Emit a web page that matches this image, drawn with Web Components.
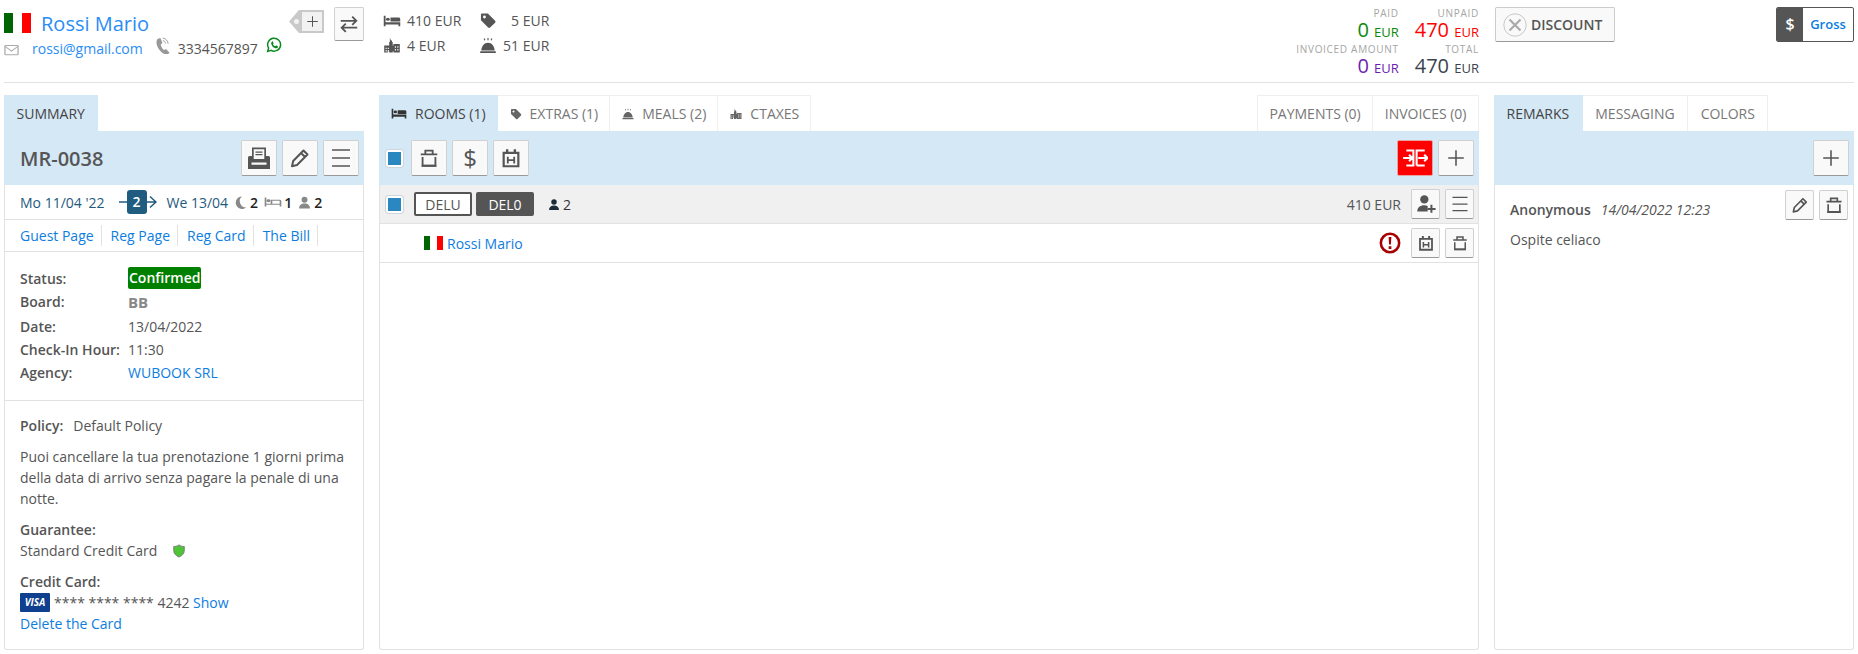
<!DOCTYPE html>
<html>
<head>
<meta charset="utf-8">
<title>Reservation</title>
<style>
    html, body { margin: 0; padding: 0; background: #fff; }
    body { font: 14px/21px "Open Sans", sans-serif; color: #555; overflow: hidden; }
</style>
</head>
<body>
<rv-app></rv-app>
<script>
(function() {
    const DARK = '#555';
    // icon drawings, all on a 24 box
    const ICONS = {
        bed: '<path fill="currentColor" d="M1 3h2.4v11H23v7h-2.4v-3H3.4v3H1z"/><circle fill="currentColor" cx="6.5" cy="9" r="2.6"/><path fill="currentColor" d="M10 6h10.500a2.500 2.500 0 0 1 2.500 2.500V13H10z"/>',
        bedline: '<path fill="none" stroke="currentColor" stroke-width="2.200" d="M2 3v18M2 16.500h20M22 21v-11a1.500 1.500 0 0 0-1.500-1.500H10v8"/><circle fill="currentColor" cx="6" cy="9.500" r="2.800"/>',
        tag: '<path fill="currentColor" fill-rule="evenodd" d="M2 3.500A1.500 1.500 0 0 1 3.500 2h8.300L22 12.200a2 2 0 0 1 0 2.800l-7 7a2 2 0 0 1-2.800 0L2 11.800zM7 5a2 2 0 1 0 0 4 2 2 0 0 0 0-4z"/>',
        city: '<path fill="currentColor" fill-rule="evenodd" d="M9 1l1.500 4H12v2h1v5h1V10h9v12h-9v-2h-1v2H8v-2H6v2H1V12h7V7h1z"/><path fill="#fff" d="M3 15h1.500v2H3zM3 18.500h1.500v2H3zM6 15h1.500v2H6zM6 18.500h1.500v2H6zM16 13h1.500v2H16zM19.500 13H21v2h-1.500zM16 17h1.500v2H16zM19.500 17H21v2h-1.500z"/>',
        bell: '<path fill="currentColor" d="M12 8c-5.500 0-9 5-9.500 11h19C21 13 17.500 8 12 8zM1 20h22v2.500H1z"/><path fill="currentColor" d="M11.200 1.500h1.600v3h-1.600zM5.800 2.500l1.400-.7 1.200 2.600-1.400.7zM18.200 2.500l-1.400-.7-1.200 2.600 1.400.7z"/>',
        mail: '<rect x="1.500" y="3" width="21" height="18.500" rx="1" fill="none" stroke="currentColor" stroke-width="2"/><path fill="none" stroke="currentColor" stroke-width="2" d="M2 5l10 9 10-9"/>',
        phone: '<path fill="currentColor" d="M5.500 2.500L9 1.500l3 7-2.500 2c.5 3 2.200 6 4.700 7.800l2.800-1.500 5 5.500-2.500 2c-2 .8-5 .2-7.500-1.800C7.500 19.500 3.500 13 3.500 7.500c0-2 .7-4 2-5z"/><path fill="none" stroke="currentColor" stroke-width="1.300" d="M12.500 1.500c4 .5 7 3.500 7.500 8M12.500 5c2 .3 3.800 2 4 4.300"/>',
        whatsapp: '<path fill="none" stroke="#0a8a1e" stroke-width="2.200" d="M2.500 21.500l1.400-5A9.700 9.700 0 1 1 7.600 20z"/><path fill="#0a8a1e" d="M8.800 6.800c.5-.5 1.200-.4 1.500.2l.9 1.900c.2.400 0 .8-.2 1.100l-.6.700c.7 1.400 1.900 2.500 3.400 3.200l.8-.9c.3-.3.700-.4 1.100-.2l1.900 1c.4.200.5.700.4 1.100-.4 1.500-1.700 2.300-3.200 2-3.700-.8-6.300-3.400-7-6.800-.2-1.200.3-2.400 1.300-3.300z"/>',
        plus: '<path fill="none" stroke="currentColor" stroke-width="1.700" d="M12 3.500v17M3.500 12h17"/>',
        swap: '<path fill="none" stroke="currentColor" stroke-width="2" d="M3 8.500h17M15.500 4l4.500 4.500-4.500 4.500M21 16H4M8.500 11.500L4 16l4.500 4.500"/>',
        printer: '<path fill="currentColor" fill-rule="evenodd" d="M5 1.500h14V10h2.500A1.500 1.500 0 0 1 23 11.500V23H1V11.500A1.500 1.500 0 0 1 2.500 10H5zM6.700 3.200V13h10.600V3.200zM4.500 16.500v2.300h15v-2.300z"/><path fill="currentColor" d="M8.500 5.500h7v1.200h-7zM8.500 8h7v1.200h-7z"/>',
        pencil: '<path fill="none" stroke="currentColor" stroke-width="2" stroke-linejoin="round" d="M15.500 4.500l4 4L9 19l-5 1.200L5.200 15zM13 7l4 4"/>',
        menu: '<path fill="none" stroke="currentColor" stroke-width="1.500" d="M3 4h18M3 12h18M3 20h18"/>',
        trash: '<path fill="none" stroke="currentColor" stroke-width="2" d="M3 8h18M8 8V4h8v4M5 11v9.500h14V11"/><path fill="currentColor" d="M4 19.200h16v2.300H4z"/>',
        stay: '<path fill="none" stroke="currentColor" stroke-width="2.400" d="M4 6.500h16V21H4z"/><path fill="currentColor" d="M6.500 2.500h2.600V7H6.500zM14.900 2.500h2.600V7h-2.600zM7.500 10.500h2v7.500h-2zM14.500 10.500h2v7.500h-2zM7.500 13.400h9v1.800h-9z"/>',
        split: '<path fill="none" stroke="currentColor" stroke-width="1.900" d="M4 5h6.500v14H4M13.500 19V5H21M13.500 19H21M1 12h8M6.500 9l3 3-3 3M15 12h8M20.500 9l3 3-3 3"/>',
        person: '<circle fill="currentColor" cx="12" cy="7" r="5.500"/><path fill="currentColor" d="M2 23c0-6 4-9 10-9s10 3 10 9z"/>',
        addperson: '<circle fill="currentColor" cx="10" cy="6.500" r="5"/><path fill="currentColor" d="M1.500 21c0-5 3.500-7.500 8.500-7.500 1.500 0 3 .2 4 .8V21z"/><path fill="none" stroke="currentColor" stroke-width="2.400" d="M18.500 13v9.500M14 18h9.500"/>',
        moon: '<path fill="currentColor" d="M14.500 1a11.500 11.500 0 1 0 8 20A11.500 11.500 0 0 1 14.500 1z"/>',
        alert: '<circle fill="none" stroke="currentColor" stroke-width="2.800" cx="12" cy="12" r="10"/><path fill="currentColor" d="M10.500 5.500h3l-.5 8h-2zM10.500 15.500h3v3h-3z"/>',
        shield: '<path fill="#4fc436" stroke="#777" stroke-width="1.600" d="M12 1.500c2.500 2 5.500 2.800 9 2.800v7c0 5-3.500 8.700-9 11-5.500-2.300-9-6-9-11v-7c3.500 0 6.500-.8 9-2.800z"/>',
        discount: '<circle fill="none" stroke="#c8c8c8" stroke-width="1" cx="12" cy="12" r="11.200"/><path fill="none" stroke="#aaa" stroke-width="2.200" d="M6.500 6.500l11 11M17.500 6.500l-11 11"/>',
        arrow: '<path fill="none" stroke="currentColor" stroke-width="1.500" d="M0 8h37M31 2.500L37 8l-6 5.500"/>'
    };

    function make(tag, css, html) {
        customElements.define(tag, class extends HTMLElement {
            constructor() {
                super();
                this.attachShadow({ mode: 'open' });
            }
            connectedCallback() {
                if (this.shadowRoot.firstChild) return;
                const markup = typeof html === 'function' ? html(this) : html;
                this.shadowRoot.innerHTML = `<style>${css}</style>${markup}`;
            }
        });
    }

    make('rv-icon', `
        :host { display: inline-flex; flex: none; }
        svg { display: block; width: 100%; height: 100%; }
    `, el => `<svg viewBox="0 0 ${el.getAttribute('box') || '24 24'}"${el.hasAttribute('stretch') ? ' preserveAspectRatio="none"' : ''}>${ICONS[el.getAttribute('name')] || ''}</svg>`);

    make('rv-flag', `
        :host { display: inline-flex; flex: none; width: 19px; height: 14px; }
        i { flex: 1; }
        .g { background: #006400; } .w { background: #fff; } .r { background: #f00; }
    `, `<i class="g"></i><i class="w"></i><i class="r"></i>`);

    make('rv-btn', `
        :host {
            display: inline-flex; flex: none; align-items: center; justify-content: center;
            box-sizing: border-box; width: 36px; height: 36px;
            background: #f9f9f9; border: 1px solid #d0d0d0; border-bottom-color: #999; border-radius: 2px; color: ${DARK};
        }
        :host([small]) { width: 29px; height: 30px; }
        :host([red]) { background: #f00; border-color: #e8a0a0; color: #fff; }
        rv-icon { width: var(--s, 22px); height: var(--s, 22px); }
    `, el => el.getAttribute('icon') ? `<rv-icon name="${el.getAttribute('icon')}"></rv-icon>` : `<slot></slot>`);

    make('rv-tab', `
        :host {
            display: flex; align-items: center; gap: 8px; box-sizing: border-box; height: 36px; padding: 0 12.5px;
            background: #fff; border: 1px solid #efefef; border-bottom: 0; border-left: 0; color: #777; text-transform: uppercase; white-space: nowrap;
        }
        :host([icon]) { padding: 0 11px 0 12px; }
        :host([slot="tabs-right"]) { padding: 0 11.5px; }
        :host([active]) { background: #d5e8f6; border-color: #d5e8f6; color: #444; }
        rv-icon { width: 12px; height: 12px; color: #666; }
        :host([active]) rv-icon { width: 16px; height: 13px; color: #333; }
    `, el => `${el.getAttribute('icon') ? `<rv-icon stretch name="${el.getAttribute('icon')}"></rv-icon>` : ''}<slot></slot>`);

    make('rv-panel', `
        :host { display: flex; flex-direction: column; min-width: 0; }
        .tabs { display: flex; justify-content: space-between; height: 36px; }
        .group { display: flex; }
        .box {
            flex: 1; display: flex; flex-direction: column; background: #fff;
            border: 1px solid #e2e2e2; border-top: 0; border-radius: 0 0 3px 3px;
        }
        .bar {
            display: flex; align-items: center; gap: 5px; box-sizing: border-box; height: 54px; margin: 0 -1px;
            padding: 0 5px 0 7px; background: #d5e8f6;
        }
    `, `
        <div class="tabs"><div class="group"><slot name="tabs"></slot></div><div class="group"><slot name="tabs-right"></slot></div></div>
        <div class="box"><div class="bar"><slot name="bar"></slot></div><slot></slot></div>
    `);

    make('rv-check', `
        :host {
            display: inline-block; flex: none; box-sizing: border-box; width: 17px; height: 17px;
            background: #2b87c0; border: 2px solid #fff; outline: 1px solid #ccd6de; border-radius: 2px;
        }
    `, ``);

    make('rv-guest', `
        :host { display: block; width: 285px; }
        .name { display: flex; align-items: center; height: 20px; margin-top: 13px; gap: 10px; font-size: 20px; color: #2a8df5; }
        .name rv-flag { width: 27px; height: 20px; }
        .contact { display: flex; align-items: flex-start; margin-top: 4px; color: #555; }
        a { color: #2a8df5; }
        .mail { width: 15px; height: 12px; margin: 7px 13px 0 0; color: #aaa; }
        .mailtext { margin-top: 1px; }
        .phone { width: 17px; height: 17px; margin-left: 11px; color: #999; }
        .num { margin: 1px 8px 0 7px; }
        .wa { width: 16px; height: 16px; }
    `, `
        <div class="name"><rv-flag></rv-flag><span>Rossi Mario</span></div>
        <div class="contact">
            <rv-icon class="mail" stretch name="mail"></rv-icon><a class="mailtext">rossi@gmail.com</a>
            <rv-icon class="phone" name="phone"></rv-icon><span class="num">3334567897</span>
            <rv-icon class="wa" name="whatsapp"></rv-icon>
        </div>
    `);

    make('rv-tag-add', `
        :host { display: flex; align-items: center; width: 35px; height: 23px; margin-top: 10px; background: #c9c9c9;
            clip-path: polygon(0 50%, 10px 0, 100% 0, 100% 100%, 10px 100%); padding: 0 2px 0 5px; box-sizing: border-box; }
        i { width: 5px; height: 5px; border-radius: 50%; background: #f2f2f2; margin-right: auto; }
        div { display: flex; align-items: center; justify-content: center; width: 20px; height: 19px; background: #f2f2f2; color: #555; }
        rv-icon { width: 15px; height: 15px; }
    `, `<i></i><div><rv-icon name="plus"></rv-icon></div>`);

    make('rv-stats', `
        :host { display: grid; grid-template-columns: 96px auto; grid-auto-rows: 25px; margin-left: 19px; margin-top: 8px; white-space: nowrap; }
        span { display: flex; align-items: center; gap: 6px; }
        rv-icon { width: 18px; height: 17px; color: #555; }
        .in { gap: 14px; }
        .b { height: 14px; }
    `, `
        <span><rv-icon class="b" stretch name="bed"></rv-icon>410 EUR</span>
        <span class="in"><rv-icon name="tag"></rv-icon>5 EUR</span>
        <span><rv-icon name="city"></rv-icon>4 EUR</span>
        <span><rv-icon name="bell"></rv-icon>51 EUR</span>
    `);

    make('rv-amount', `
        :host { display: block; text-align: right; white-space: nowrap; color: var(--c); }
        .l { display: block; height: 11px; font-size: 10px; line-height: 11px; letter-spacing: .7px; color: #a5a5a5; }
        .v { display: block; height: 22px; line-height: 22px; font-size: 20px; }
        small { font-size: 13px; }
    `, el => `<span class="l">${el.getAttribute('label')}</span><span class="v">${el.getAttribute('value')} <small>EUR</small></span>`);

    make('rv-amounts', `
        :host { display: grid; grid-template-columns: auto auto; grid-auto-rows: 36px; column-gap: 16px; margin-left: auto; margin-top: 8px; }
    `, `<slot></slot>`);

    make('rv-discount', `
        :host {
            display: flex; align-items: center; gap: 4px; box-sizing: border-box; width: 120px; height: 35px; margin: 7px 0 0 16px; padding-left: 7px;
            background: #f9f9f9; border: 1px solid #ccc; border-bottom-color: #999; border-radius: 2px;
            font-weight: 600; color: #555;
        }
        rv-icon { width: 24px; height: 24px; }
    `, `<rv-icon name="discount"></rv-icon>DISCOUNT`);

    make('rv-gross', `
        :host {
            display: flex; align-items: stretch; box-sizing: border-box; width: 78px; height: 35px; margin: 7px 0 0 161px;
            border: 1px solid #555; border-radius: 2px; overflow: hidden; background: #fff;
        }
        b { display: flex; align-items: center; justify-content: center; width: 26px; background: #555; color: #fff; font-size: 16px; font-weight: 600; }
        span { flex: 1; display: flex; align-items: center; justify-content: center; color: #0d7de0; font-size: 13px; font-weight: 600; }
    `, `<b>$</b><span>Gross</span>`);

    make('rv-topbar', `
        :host { display: flex; align-items: flex-start; box-sizing: border-box; height: 83px; border-bottom: 1px solid #e2e2e2; margin: 0 4px; }
        .swap { width: 30px; height: 34px; margin: 7px 0 0 10px; }
    `, `
        <rv-guest></rv-guest>
        <rv-tag-add></rv-tag-add>
        <rv-btn class="swap" icon="swap"></rv-btn>
        <rv-stats></rv-stats>
        <rv-amounts>
            <rv-amount label="PAID" value="0" style="--c:#0a8a0a"></rv-amount>
            <rv-amount label="UNPAID" value="470" style="--c:#f00"></rv-amount>
            <rv-amount label="INVOICED AMOUNT" value="0" style="--c:#6a1fb0"></rv-amount>
            <rv-amount label="TOTAL" value="470" style="--c:#3a4450"></rv-amount>
        </rv-amounts>
        <rv-discount></rv-discount>
        <rv-gross></rv-gross>
    `);

    make('rv-stay-line', `
        :host { display: flex; align-items: center; box-sizing: border-box; height: 35px; padding-left: 15px; border-bottom: 1px solid #e2e2e2; color: #1f5a7e; white-space: nowrap; }
        .trip { display: flex; align-items: center; justify-content: center; width: 38px; height: 24px; margin: 0 10px 0 14px; position: relative; }
        .trip rv-icon { width: 38px; height: 16px; color: #1f5a7e; }
        .trip b { position: absolute; left: 8px; top: 0; width: 20px; height: 24px; border-radius: 3px; background: #1f5c80; color: #fff; font-weight: 600; text-align: center; line-height: 24px; }
        rv-icon.i { width: 13px; height: 13px; margin: 0 3px 0 6px; color: #888; }
        rv-icon.bed { width: 18px; height: 12px; margin-right: 2px; }
        strong { color: #222; font-weight: 600; }
    `, `
        <span>Mo 11/04 '22</span>
        <div class="trip"><rv-icon name="arrow" box="38 16"></rv-icon><b>2</b></div>
        <span>We 13/04</span>
        <rv-icon class="i" name="moon"></rv-icon><strong>2</strong>
        <rv-icon class="i bed" stretch name="bedline"></rv-icon><strong>1</strong>
        <rv-icon class="i" name="person"></rv-icon><strong>2</strong>
    `);

    make('rv-link-line', `
        :host { display: flex; align-items: center; box-sizing: border-box; height: 32px; padding-left: 15px; border-bottom: 1px solid #e2e2e2; }
        a { color: #0d7de0; padding-right: 7px; margin-right: 9px; border-right: 1px solid #e2e2e2; }
    `, `<a>Guest Page</a><a>Reg Page</a><a>Reg Card</a><a>The Bill</a>`);

    make('rv-info', `
        :host { display: grid; grid-template-columns: 108px 1fr; grid-auto-rows: 23px; align-items: center; padding: 15px 15px 18px; border-bottom: 1px solid #e2e2e2; }
        b { font-weight: 600; }
        .st { justify-self: start; background: #008000; color: #fff; font-weight: 600; border-radius: 2px; height: 22px; line-height: 22px; padding: 0 1px; margin-top: -1px; }
        .s { margin-top: -1px; }
        .bb { font-weight: 700; font-size: 15px; color: #888; padding-top: 2px; }
        .d { margin-top: 4px; }
        a { color: #0d7de0; }
    `, `
        <b class="s">Status:</b><span class="st">Confirmed</span>
        <b>Board:</b><span class="bb">BB</span>
        <b class="d">Date:</b><span class="d">13/04/2022</span>
        <b class="d">Check-In Hour:</b><span class="d">11:30</span>
        <b class="d">Agency:</b><a class="d">WUBOOK SRL</a>
    `);

    make('rv-terms', `
        :host { display: block; padding: 14px 15px 0; }
        b { font-weight: 600; }
        p { margin: 10px 0 0; }
        a { color: #0d7de0; }
        .pol b { margin-right: 10px; }
        .line { display: flex; align-items: center; height: 21px; white-space: pre; }
        rv-icon { width: 14px; height: 16px; margin-left: 15px; }
        .visa {
            display: block; width: 30px; height: 19px; margin-right: 4px; border-radius: 1px;
            background: #0f3f8f; color: #fff; font: italic 700 10px/19px "Open Sans", sans-serif; text-align: center;
        }
    `, `
        <div class="pol"><b>Policy:</b>Default Policy</div>
        <p>Puoi cancellare la tua prenotazione 1 giorni prima della data di arrivo senza pagare la penale di una notte.</p>
        <p><b>Guarantee:</b></p>
        <div class="line">Standard Credit Card<rv-icon name="shield"></rv-icon></div>
        <p><b>Credit Card:</b></p>
        <div class="line"><span class="visa">VISA</span>**** **** **** 4242 <a>Show</a></div>
        <div class="line"><a>Delete the Card</a></div>
    `);

    make('rv-summary', `
        :host { display: flex; }
        rv-panel { flex: 1; }
        h1 { margin: 0 auto 0 9px; font-size: 20px; font-weight: 600; color: #555; }
        rv-btn { --s: 24px; }
    `, `
        <rv-panel>
            <rv-tab slot="tabs" active>Summary</rv-tab>
            <h1 slot="bar">MR-0038</h1>
            <rv-btn slot="bar" icon="printer"></rv-btn>
            <rv-btn slot="bar" icon="pencil"></rv-btn>
            <rv-btn slot="bar" icon="menu"></rv-btn>
            <rv-stay-line></rv-stay-line>
            <rv-link-line></rv-link-line>
            <rv-info></rv-info>
            <rv-terms></rv-terms>
        </rv-panel>
    `);

    make('rv-room-row', `
        :host { display: flex; align-items: center; box-sizing: border-box; height: 39px; padding: 0 4px 0 6px; background: #f0f0f0; border-bottom: 1px solid #e2e2e2; }
        .code { display: inline-flex; align-items: center; justify-content: center; box-sizing: border-box; width: 58px; height: 24px; border: 2px solid #555; border-radius: 2px; background: #fff; color: #555; }
        .code.on { background: #555; color: #fff; margin-left: 4px; }
        rv-check { margin-right: 11px; }
        .p { display: flex; align-items: center; gap: 3px; margin-left: 14px; color: #333; }
        .p rv-icon { width: 12px; height: 13px; color: #1c2b3a; }
        .price { margin: 0 10px 0 auto; }
        rv-btn + rv-btn { margin-left: 5px; }
        rv-btn { --s: 20px; }
    `, `
        <rv-check></rv-check>
        <span class="code">DELU</span><span class="code on">DEL0</span>
        <span class="p"><rv-icon name="person"></rv-icon>2</span>
        <span class="price">410 EUR</span>
        <rv-btn small icon="addperson"></rv-btn>
        <rv-btn small icon="menu"></rv-btn>
    `);

    make('rv-guest-row', `
        :host { display: flex; align-items: center; box-sizing: border-box; height: 39px; padding: 0 4px 0 44px; border-bottom: 1px solid #e2e2e2; }
        a { color: #0d7de0; margin-left: 4px; }
        .alert { width: 22px; height: 22px; margin: 0 10px 0 auto; color: #a60000; }
        rv-btn + rv-btn { margin-left: 5px; }
        rv-btn { --s: 18px; }
    `, `
        <rv-flag></rv-flag><a>Rossi Mario</a>
        <rv-icon class="alert" name="alert"></rv-icon>
        <rv-btn small icon="stay"></rv-btn>
        <rv-btn small icon="trash"></rv-btn>
    `);

    make('rv-rooms', `
        :host { display: flex; }
        rv-panel { flex: 1; }
        rv-check { margin-right: 3px; }
        rv-btn.push { margin-left: auto; }
        .red { --s: 26px; }
        .dollar { font-size: 24px; line-height: 30px; }
    `, `
        <rv-panel>
            <rv-tab slot="tabs" active icon="bed">Rooms (1)</rv-tab>
            <rv-tab slot="tabs" icon="tag">Extras (1)</rv-tab>
            <rv-tab slot="tabs" icon="bell">Meals (2)</rv-tab>
            <rv-tab slot="tabs" icon="city">CTaxes</rv-tab>
            <rv-tab slot="tabs-right" style="border-left:1px solid #efefef">Payments (0)</rv-tab>
            <rv-tab slot="tabs-right">Invoices (0)</rv-tab>
            <rv-check slot="bar"></rv-check>
            <rv-btn slot="bar" icon="trash"></rv-btn>
            <rv-btn slot="bar" class="dollar">$</rv-btn>
            <rv-btn slot="bar" icon="stay"></rv-btn>
            <rv-btn slot="bar" class="push red" red icon="split"></rv-btn>
            <rv-btn slot="bar" icon="plus"></rv-btn>
            <rv-room-row></rv-room-row>
            <rv-guest-row></rv-guest-row>
        </rv-panel>
    `);

    make('rv-remark', `
        :host { display: block; padding: 5px 5px 0 15px; }
        .head { display: flex; align-items: center; height: 30px; }
        b { font-weight: 600; padding-top: 8px; }
        em { margin-left: 10px; padding-top: 8px; }
        rv-btn { --s: 20px; }
        .first { margin: 0 5px 0 auto; }
        p { margin: 9px 0 0; }
    `, `
        <div class="head"><b>Anonymous</b><em>14/04/2022 12:23</em><rv-btn class="first" small icon="pencil"></rv-btn><rv-btn small icon="trash"></rv-btn></div>
        <p>Ospite celiaco</p>
    `);

    make('rv-remarks', `
        :host { display: flex; }
        rv-panel { flex: 1; }
        rv-btn { margin-left: auto; }
    `, `
        <rv-panel>
            <rv-tab slot="tabs" active>Remarks</rv-tab>
            <rv-tab slot="tabs">Messaging</rv-tab>
            <rv-tab slot="tabs">Colors</rv-tab>
            <rv-btn slot="bar" icon="plus"></rv-btn>
            <rv-remark></rv-remark>
        </rv-panel>
    `);

    make('rv-app', `
        :host { display: block; }
        .cols { display: grid; grid-template-columns: 360px 1100px 360px; column-gap: 15px; height: 555px; margin: 12px 4px 0; }
    `, `
        <rv-topbar></rv-topbar>
        <div class="cols"><rv-summary></rv-summary><rv-rooms></rv-rooms><rv-remarks></rv-remarks></div>
    `);
})();
</script>
</body>
</html>
